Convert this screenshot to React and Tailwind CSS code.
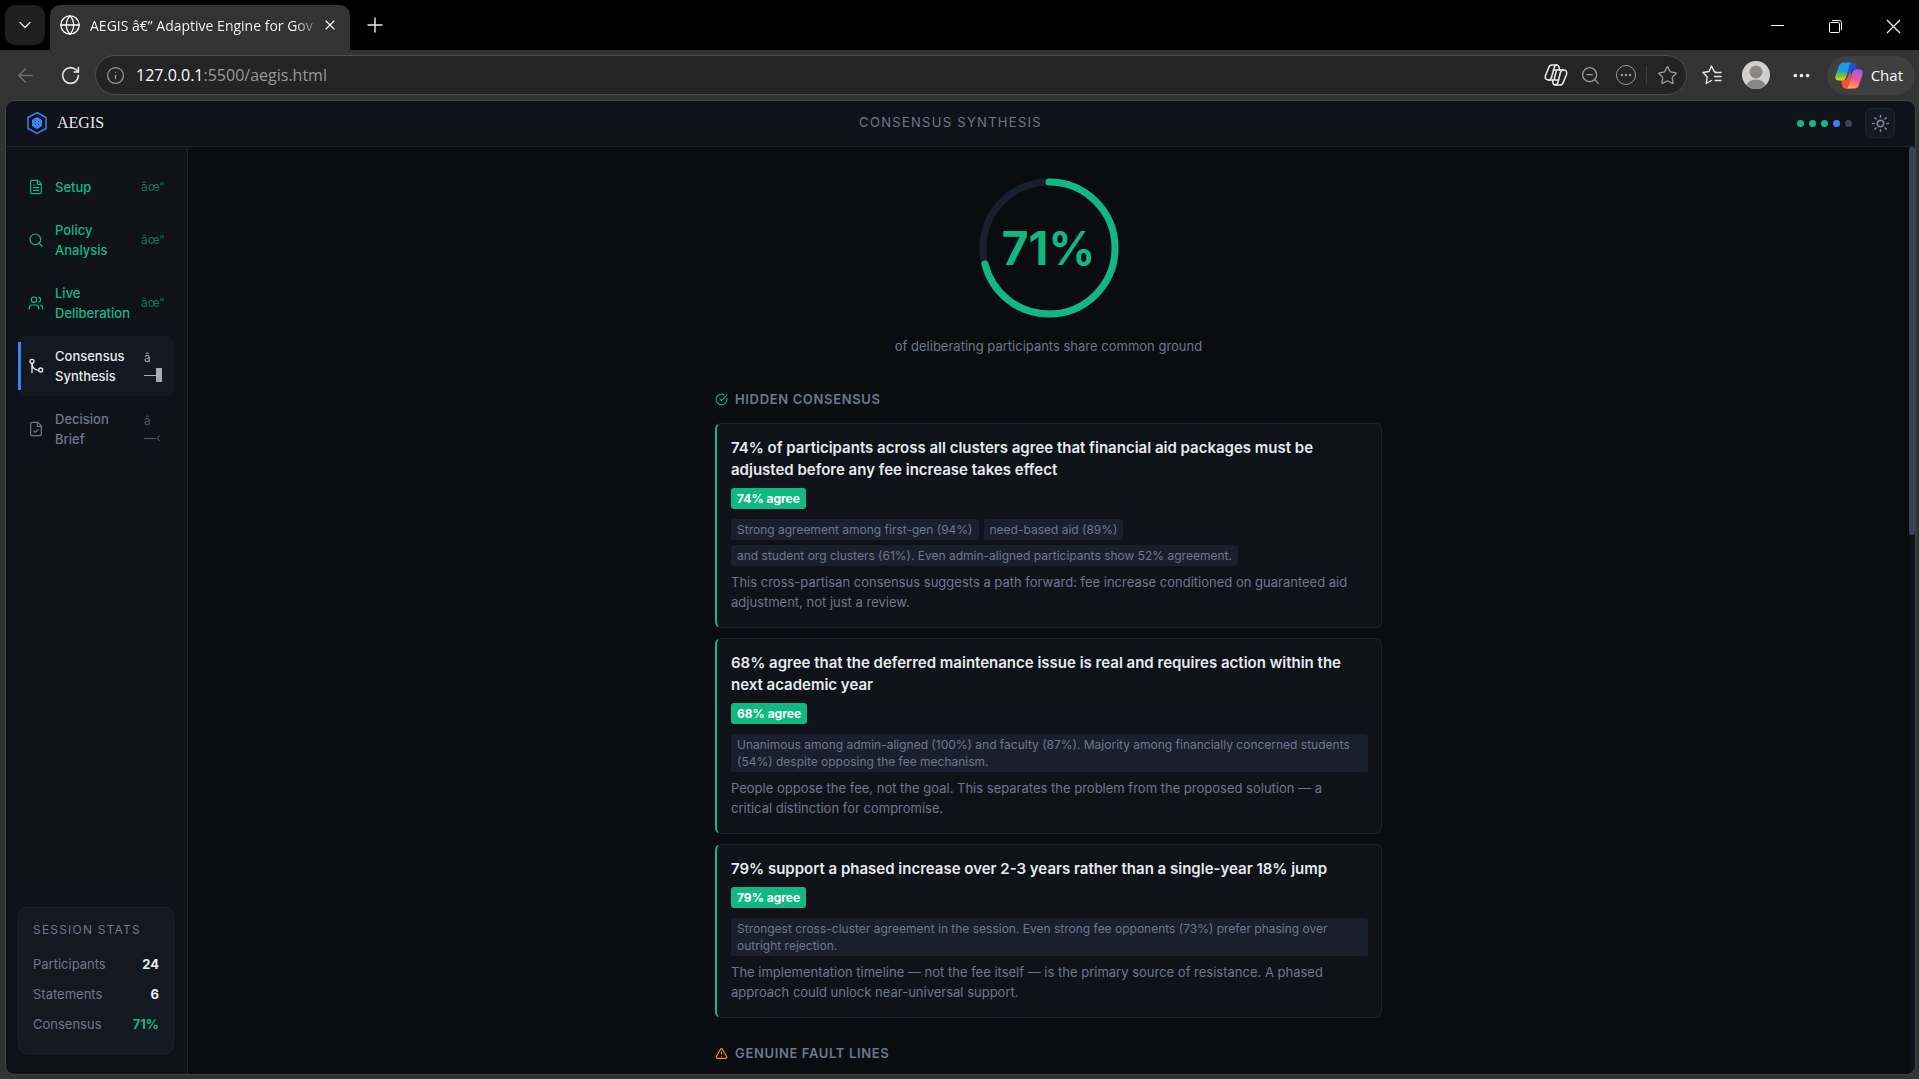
import React from 'react';
import {
  ArrowLeft,
  ChevronDown,
  CircleCheckBig,
  Ellipsis,
  FileCheck,
  FileText,
  Globe,
  Info,
  Plus,
  RotateCw,
  Search,
  Star,
  Sun,
  TriangleAlert,
  Users,
  X,
  ZoomOut,
} from 'lucide-react';

const steps = [
  { label: 'Setup', icon: FileText, status: 'done', mark: 'âœ“' },
  { label: 'Policy Analysis', icon: Search, status: 'done', mark: 'âœ“' },
  { label: 'Live Deliberation', icon: Users, status: 'done', mark: 'âœ“' },
  { label: 'Consensus Synthesis', icon: MergeIcon, status: 'active', mark: '—' },
  { label: 'Decision Brief', icon: FileCheck, status: 'pending', mark: '—‹' },
];

const stats = [
  { label: 'Participants', value: '24', color: 'text-[#e8eaf0]' },
  { label: 'Statements', value: '6', color: 'text-[#e8eaf0]' },
  { label: 'Consensus', value: '71%', color: 'text-[#10b981]' },
];

const findings = [
  {
    title:
      '74% of participants across all clusters agree that financial aid packages must be adjusted before any fee increase takes effect',
    agree: '74% agree',
    tags: [
      'Strong agreement among first-gen (94%)',
      'need-based aid (89%)',
      'and student org clusters (61%). Even admin-aligned participants show 52% agreement.',
    ],
    note: ['This cross-partisan consensus suggests a path forward: fee increase conditioned on guaranteed aid', 'adjustment, not just a review.'],
  },
  {
    title:
      '68% agree that the deferred maintenance issue is real and requires action within the next academic year',
    agree: '68% agree',
    tags: [
      'Unanimous among admin-aligned (100%) and faculty (87%). Majority among financially concerned students (54%) despite opposing the fee mechanism.',
    ],
    note: ['People oppose the fee, not the goal. This separates the problem from the proposed solution — a', 'critical distinction for compromise.'],
  },
  {
    title: '79% support a phased increase over 2-3 years rather than a single-year 18% jump',
    agree: '79% agree',
    tags: [
      'Strongest cross-cluster agreement in the session. Even strong fee opponents (73%) prefer phasing over outright rejection.',
    ],
    note: ['The implementation timeline — not the fee itself — is the primary source of resistance. A phased', 'approach could unlock near-universal support.'],
  },
];

function MergeIcon({ size = 16, className }) {
  return (
    <svg width={size} height={size} viewBox="0 0 24 24" fill="none" stroke="currentColor" strokeWidth="2" strokeLinecap="round" className={className}>
      <circle cx="6" cy="5" r="3" />
      <circle cx="19" cy="18" r="3" />
      <path d="M6 8v14" />
      <path d="M6 9a9 9 0 0 0 10 9" />
    </svg>
  );
}

function CopilotOutline() {
  return (
    <svg width="24" height="22" viewBox="0 0 24 22" fill="none" stroke="#e6e6e6" strokeWidth="1.6" strokeLinejoin="round" strokeLinecap="round">
      <path d="M15.500 6 15 3Q14.500 1 12.500 1H8Q5.500 1 4.800 3.500L1.500 11.500Q.5 16 4.500 16H7.500" />
      <path d="M8.500 16 9 19Q9.500 21 11.500 21H16Q18.500 21 19.200 18.500L22.500 10.500Q23.500 6 19.500 6H15.500" />
      <path d="M13 1Q10.800 1 10.200 3.500L7.500 13.500Q6.800 16 4.500 16M11 21Q13.200 21 13.800 18.500L16.500 8.500Q17.200 6 19.500 6" />
      <path d="M9.500 6H15.500M8.500 16H14.500M12.500 6 10 16" />
    </svg>
  );
}

function CopilotLogo() {
  return (
    <svg width="28" height="27" viewBox="0 0 28 27">
      <defs>
        <linearGradient id="cpLeft" x1="0" y1="0" x2="0" y2="1">
          <stop offset="0" stopColor="#1d9bf0" />
          <stop offset="0.45" stopColor="#18a0d8" />
          <stop offset="0.7" stopColor="#6cc04a" />
          <stop offset="1" stopColor="#f5d000" />
        </linearGradient>
        <linearGradient id="cpRight" x1="0.6" y1="0" x2="0.3" y2="1">
          <stop offset="0" stopColor="#a35bf5" />
          <stop offset="0.5" stopColor="#f0569a" />
          <stop offset="1" stopColor="#ffa84c" />
        </linearGradient>
      </defs>
      <path d="M13 .5h5q2 0 2.600 2l1.600 5H17l-5 9z" fill="#1a56d6" />
      <path d="M15 26.500h-5q-2 0-2.600-2L6 18h5l5-9z" fill="#f0522e" />
      <path d="M8.500 .5H17q-1.800.3-2.500 2.500L11 15.500q-1 3-4 3H3.500Q-.5 18.500.5 13.500L4 4Q5.300.5 8.500.5z" fill="url(#cpLeft)" />
      <path d="M19.500 26.500H11q1.800-.3 2.500-2.500L17 11.500q1-4 4-4h3.500q4 0 3 5L24 23q-1.300 3.500-4.500 3.500z" fill="url(#cpRight)" />
    </svg>
  );
}

function FavoritesIcon() {
  return (
    <svg width="20" height="20" viewBox="0 0 20 20" fill="none" stroke="#e6e6e6" strokeWidth="1.4" strokeLinecap="round" strokeLinejoin="round">
      <path d="M13 6.500 12.200 6.500 9.500 1 7 6.500 1 7.500 5.200 12 4.200 18.500 9.500 15.500" />
      <path d="M13 7.500h6M12.500 11.500h6.500M13 15.500h6" />
    </svg>
  );
}

function AegisLogo() {
  return (
    <svg width="22" height="24" viewBox="0 0 22 24" fill="none" stroke="#3b82f6">
      <path d="M11 1.500 20 6.500v11L11 22.500 2 17.500v-11z" strokeWidth="1.500" />
      <path d="M11 6.500 15.500 9v6L11 17.500 6.500 15V9z" fill="#3b82f6" />
      <path d="M9 10.500h1M12 10.500h1M9 13.500h1M12 13.500h1" stroke="#12326b" />
    </svg>
  );
}

function Browser() {
  return (
    <header className="font-['Open_Sans','Noto_Sans',sans-serif]">
      {/* Tab strip */}
      <div className="flex h-[50px] items-end bg-black pl-[5px]">
        <button aria-label="Tab actions" className="mb-[5px] flex h-10 w-10 items-center justify-center rounded-[10px] bg-[#1f1f1f] text-[#e6e6e6]">
          <ChevronDown size={20} strokeWidth={1.5} />
        </button>
        <div className="ml-[5px] flex h-[45px] w-[300px] items-center rounded-t-[10px] bg-[#333333] pb-[5px] pl-[9px] pr-3 text-white">
          <Globe size={22} strokeWidth={1.4} className="shrink-0" />
          <span className="ml-[9px] flex-1 whitespace-nowrap bg-linear-to-r from-white from-90% to-[#555555] bg-clip-text text-[14px] text-transparent">
            AEGIS â€” Adaptive Engine for Gov
          </span>
          <button aria-label="Close tab" className="ml-1 shrink-0">
            <X size={16} strokeWidth={1.6} />
          </button>
        </div>
        <button aria-label="New tab" className="mb-[13px] ml-[13px] text-[#f0f0f0]">
          <Plus size={24} strokeWidth={1.4} />
        </button>
        <div className="mb-4 ml-auto flex items-center gap-[43px] pr-[18px] text-white">
          <button aria-label="Minimize">
            <svg width="15" height="15" viewBox="0 0 15 15" stroke="currentColor"><path d="M1 6.500h13" /></svg>
          </button>
          <button aria-label="Restore">
            <svg width="15" height="15" viewBox="0 0 15 15" fill="none" stroke="currentColor">
              <rect x="1.500" y="3.500" width="10" height="10" rx="1" />
              <path d="M4 1.500h7.500q2 0 2 2V11" />
            </svg>
          </button>
          <button aria-label="Close">
            <svg width="15" height="15" viewBox="0 0 15 15" stroke="currentColor" strokeWidth="1.200"><path d="M1 1l13 13M14 1 1 14" /></svg>
          </button>
        </div>
      </div>

      {/* Address bar */}
      <div className="flex h-[50px] items-center bg-[#333333] pl-[14px] pr-1 text-[#e6e6e6]">
        <button aria-label="Back" className="text-[#6f6f6f]"><ArrowLeft size={23} strokeWidth={1.5} /></button>
        <button aria-label="Reload" className="ml-[23px]"><RotateCw size={21} strokeWidth={1.8} /></button>
        <div className="ml-[14px] flex h-10 flex-1 items-center rounded-full border border-[#4d4d4d] bg-[#242424] pl-[10px] pr-2 text-[#9a9a9a]">
          <Info size={19} strokeWidth={1.6} />
          <div className="ml-[11px] text-[16px]">
            <span className="text-white">127.0.0.1</span>:5500/aegis.html
          </div>
          <div className="ml-auto flex items-center">
            <CopilotOutline />
            <ZoomOut size={21} strokeWidth={1.5} className="ml-[12px]" />
            <span className="ml-[15px] flex h-5 w-5 items-center justify-center rounded-full border border-[#9a9a9a]">
              <Ellipsis size={14} strokeWidth={2.2} />
            </span>
            <span className="ml-[10px] h-[18px] w-px bg-[#3d3d3d]" />
            <Star size={21} strokeWidth={1.5} className="ml-[10px]" />
          </div>
        </div>
        <button aria-label="Favorites" className="ml-[15px]"><FavoritesIcon /></button>
        <button aria-label="Profile" className="ml-[20px]">
          <svg width="28" height="28" viewBox="0 0 28 28">
            <clipPath id="avatar"><circle cx="14" cy="14" r="14" /></clipPath>
            <g clipPath="url(#avatar)">
              <rect width="28" height="28" fill="#d2d0ce" />
              <circle cx="14" cy="11" r="6.500" fill="#8a8886" />
              <ellipse cx="14" cy="26" rx="10" ry="7.500" fill="#8a8886" />
            </g>
          </svg>
        </button>
        <button aria-label="More" className="ml-[21px]"><Ellipsis size={21} strokeWidth={2.2} /></button>
        <button className="ml-[15px] flex h-[39px] items-center gap-2 rounded-full bg-[#3f3f3f] pl-[8px] pr-3 text-[15px] text-white">
          <CopilotLogo />
          Chat
        </button>
      </div>
    </header>
  );
}

const stepColors = {
  done: 'text-[#10b981]',
  active: 'bg-[#141820] text-[#e8eaf0]',
  pending: 'text-[#6f778c]',
};

function Sidebar() {
  return (
    <aside className="flex w-[182px] shrink-0 flex-col border-r border-[#1e2128] bg-[#0f1219] pb-5 pl-3 pr-[13px] pt-5">
      <nav className="flex flex-col gap-[3px]">
        {steps.map((s) => (
          <a
            key={s.label}
            href="#"
            className={`relative flex items-center rounded-lg py-[10px] pl-[10px] pr-2 text-[13px] font-medium leading-5 ${stepColors[s.status]}`}
          >
            {s.status === 'active' && <span className="absolute inset-y-[6px] left-0 w-[3px] bg-[#3b82f6]" />}
            <s.icon size={16} strokeWidth={1.8} className="shrink-0" />
            <span className="ml-[11px] w-[77px]">{s.label}</span>
            {s.status === 'done' ? (
              <span className="ml-[9px] flex-1 whitespace-nowrap text-[12px] font-normal opacity-60">{s.mark}</span>
            ) : (
              <span className="ml-3 flex-1 whitespace-nowrap text-[12px] font-normal opacity-70">
                <span className="block h-[18px]">â</span>
                <span className="flex h-[18px] items-center">
                  {s.mark}
                  {s.status === 'active' && <span className="h-[14px] w-[6px] shrink-0 bg-[#e8eaf0]" />}
                </span>
              </span>
            )}
          </a>
        ))}
      </nav>

      <section className="mt-auto rounded-lg border border-[#1e222b] bg-[#141820] px-[14px] py-[13px]">
        <h2 className="mb-[11px] text-[12px] leading-[18px] tracking-widest text-[#6f778c]">SESSION STATS</h2>
        <dl>
          {stats.map((s) => (
            <div key={s.label} className="flex h-[30px] items-center justify-between text-[13px]">
              <dt className="text-[#6f778c]">{s.label}</dt>
              <dd className={`font-bold ${s.color}`}>{s.value}</dd>
            </div>
          ))}
        </dl>
      </section>
    </aside>
  );
}

function Ring({ percent }) {
  const r = 66;
  const length = 2 * Math.PI * r;
  return (
    <div className="relative h-[140px] w-[140px]">
      <svg width="140" height="140" viewBox="0 0 140 140" fill="none" strokeWidth="7" className="-rotate-90">
        <circle cx="70" cy="70" r={r} stroke="#1a1f2e" />
        <circle cx="70" cy="70" r={r} stroke="#10b981" strokeLinecap="round" strokeDasharray={`${(length * percent) / 100} ${length}`} />
      </svg>
      <div className="absolute inset-0 flex items-center justify-center text-[46px] font-bold text-[#10b981]">{percent}%</div>
    </div>
  );
}

function SectionTitle({ icon, children }) {
  return (
    <h2 className="flex items-center gap-[7px] text-[13px] font-semibold leading-5 tracking-wider text-[#6f778c]">
      {icon}
      {children}
    </h2>
  );
}

function Finding({ item }) {
  return (
    <article className="rounded-md border border-l-2 border-[#1e222b] border-l-[#10b981] bg-[#0f1219] pb-[15px] pl-[14px] pr-[13px] pt-[13px]">
      <h3 className="text-[15px] font-semibold leading-[22px] text-[#e8eaf0]">{item.title}</h3>
      <div className="mt-[7px] flex">
        <span className="rounded-[3px] bg-[#10b981] px-[6px] py-[2px] text-[12px] font-bold leading-[17px] text-white">{item.agree}</span>
      </div>
      <div className="mt-[10px] flex flex-wrap gap-[5px]">
        {item.tags.map((t) => (
          <span key={t} className="rounded-[3px] bg-[#1a1f2e] px-[6px] py-[2px] text-[12px] leading-[17px] text-[#6f778c]">{t}</span>
        ))}
      </div>
      <p className="mt-[6px] text-[13px] leading-5 text-[#6f778c]">
        {item.note[0]}
        <br />
        {item.note[1]}
      </p>
    </article>
  );
}

export default function App() {
  return (
    <div className="flex h-screen flex-col overflow-hidden bg-[#333333]">
      <Browser />
      <div className="mb-[5px] ml-[6px] mr-[4px] mt-px flex min-h-0 flex-1 flex-col overflow-hidden rounded-lg bg-[#0a0c10] font-['Inter',sans-serif] outline outline-[#424242]">
        <div className="flex h-[46px] shrink-0 items-center justify-between border-b border-[#1e2128] bg-[#0f1219] px-5 pb-px">
          <div className="flex items-center gap-[9px] font-['Liberation_Serif',serif] text-[16px] text-[#e8eaf0]">
            <AegisLogo />
            AEGIS
          </div>
          <h1 className="text-[13px] tracking-widest text-[#6f778c]">CONSENSUS SYNTHESIS</h1>
          <div className="flex items-center gap-[5px]">
            <span className="h-[7px] w-[7px] rounded-full bg-[#10b981]" />
            <span className="h-[7px] w-[7px] rounded-full bg-[#10b981]" />
            <span className="h-[7px] w-[7px] rounded-full bg-[#10b981]" />
            <span className="h-[7px] w-[7px] rounded-full bg-[#3b82f6]" />
            <span className="h-[7px] w-[7px] rounded-full bg-[#3d4258]" />
            <button aria-label="Toggle theme" className="ml-2 flex h-[30px] w-[30px] items-center justify-center rounded-md border border-[#1e222b] bg-[#141820] text-[#7b8298]">
              <Sun size={19} strokeWidth={2} />
            </button>
          </div>
        </div>

        <div className="flex min-h-0 flex-1">
          <Sidebar />
          <main className="flex flex-1 flex-col items-center overflow-hidden pt-[31px]">
            <Ring percent={71} />
            <p className="mt-[18px] text-[13px] leading-5 text-[#6f778c]">of deliberating participants share common ground</p>
            <div className="mt-[33px] w-full max-w-[667px]">
              <SectionTitle icon={<CircleCheckBig size={13} className="text-[#10b981]" />}>HIDDEN CONSENSUS</SectionTitle>
              <div className="mb-[25px] mt-[14px] flex flex-col gap-[10px]">
                {findings.map((f) => (
                  <Finding key={f.agree} item={f} />
                ))}
              </div>
              <SectionTitle icon={<TriangleAlert size={13} className="text-[#f59e0b]" />}>GENUINE FAULT LINES</SectionTitle>
            </div>
          </main>
          <div className="w-[6px] bg-[#0f1219]">
            <div className="h-[388px] rounded-full bg-[#3d4258]" />
          </div>
        </div>
      </div>
    </div>
  );
}
